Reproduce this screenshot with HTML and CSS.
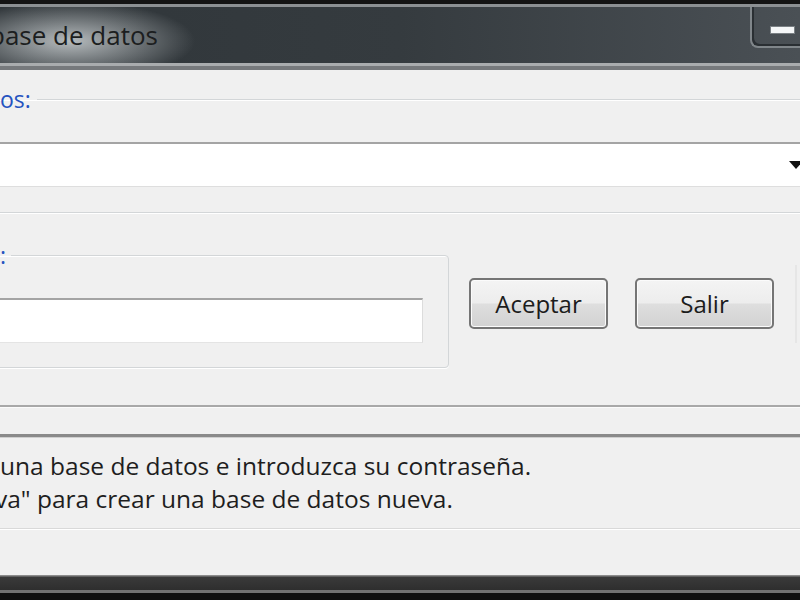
FILE: index.html
```html
<!DOCTYPE html>
<html lang="es">
<head>
    <meta charset="UTF-8">
    <meta name="viewport" content="width=device-width, initial-scale=1.0">
    <title>Abrir base de datos</title>
    <link rel="stylesheet" href="styles.css">
</head>
<body>
    <div class="frame-top"></div>
    <div class="titlebar">
        <span class="title">base de datos</span>
        <div class="caption-btn"><span class="min-glyph"></span></div>
    </div>
    <div class="title-edge"></div>

    <div class="dialog">
        <fieldset class="group group-db">
            <legend>os:</legend>
            <div class="combo">
                <svg class="combo-arrow" width="14" height="8" viewBox="0 0 14 8"><path d="M0 0h14L7 8z" fill="#111"/></svg>
            </div>
        </fieldset>

        <div class="login-row">
            <fieldset class="group group-pass">
                <legend>:</legend>
                <div class="textbox"></div>
            </fieldset>
            <button class="btn btn-ok">Aceptar</button>
            <button class="btn btn-exit">Salir</button>
            <div class="edge"></div>
        </div>

        <div class="separator"></div>

        <div class="status">
            <p>una base de datos e introduzca su contraseña.</p>
            <p class="cut">va" para crear una base de datos nueva.</p>
        </div>
    </div>

    <div class="frame-bottom"></div>
</body>
</html>
```

FILE: styles.css
```css
html, body {
    margin: 0;
    padding: 0;
    width: 800px;
    height: 600px;
    overflow: hidden;
}
body {
    font-family: "Open Sans", "Noto Sans", sans-serif;
    background-color: #f0f0f0;
    color: #1e1e1e;
    display: flex;
    flex-direction: column;
}

/* window frame */
.frame-top {
    height: 4px;
    background: #141414;
    border-bottom: 3px solid #8c9093;
}
.titlebar {
    height: 56px;
    display: flex;
    justify-content: space-between;
    align-items: flex-start;
    background:
        radial-gradient(ellipse 125px 40px at 70px 34px, rgba(205, 210, 212, 0.85), rgba(205, 210, 212, 0) 100%),
        linear-gradient(90deg, #30363a 0%, #353b3f 50%, #4a5055 100%);
}
.title {
    font-size: 26px;
    line-height: 56px;
    color: #1c1e20;
    margin-left: -11px;
}
.caption-btn {
    width: 50px;
    height: 41px;
    box-sizing: border-box;
    border-left: 2px solid #80868a;
    border-bottom: 2px solid #80868a;
    border-bottom-left-radius: 8px;
    box-shadow: inset 2px -2px 0 #2a2f33;
    padding: 20px 0 0 19px;
}
.min-glyph {
    display: block;
    width: 23px;
    height: 6px;
    background: #f4f6f7;
    box-shadow: 0 0 0 1px #7a8084;
}
.title-edge {
    height: 3px;
    background: #a9acae;
    border-bottom: 4px solid #76797c;
}

/* dialog body */
.dialog {
    flex: 1;
    display: flex;
    flex-direction: column;
}
.group {
    margin: 0 0 0 -20px;
    padding: 0;
    border: 1px solid #d3d6d8;
    border-radius: 4px;
    box-shadow: inset 1px 1px 0 #fff, 0 1px 0 #fff;
}
.group legend {
    color: #2553c0;
    font-size: 23px;
    line-height: 20px;
    padding: 0 6px 0 0;
    margin-left: 19px;
}
.group-db {
    margin-top: 19px;
    width: 840px;
    padding: 33px 0 25px 0;
    box-sizing: border-box;
}
.combo {
    height: 45px;
    box-sizing: border-box;
    background: #fff;
    border-top: 2px solid #a4a4a4;
    border-bottom: 1px solid #dedede;
    display: flex;
    align-items: center;
    justify-content: flex-end;
    padding-right: 16px;
}
.login-row {
    display: flex;
    align-items: flex-start;
    margin-top: 32px;
}
.group-pass {
    width: 469px;
    box-sizing: border-box;
    padding: 33px 25px 24px 0;
}
.group-pass legend {
    margin-left: 19px;
    padding-right: 5px;
}
.textbox {
    height: 45px;
    box-sizing: border-box;
    background: #fff;
    border-top: 2px solid #a4a4a4;
    border-right: 1px solid #dcdcdc;
    border-bottom: 1px solid #e4e4e4;
}
.btn {
    margin-top: 33px;
    width: 139px;
    height: 51px;
    font-family: inherit;
    font-size: 24px;
    color: #1c1c1c;
    border: 2px solid #757575;
    border-radius: 5px;
    background: linear-gradient(#f4f4f4 0%, #ededed 48%, #dedede 52%, #d2d2d2 100%);
    box-shadow: inset 0 0 0 1px #fbfbfb;
    padding: 0;
}
.btn-ok {
    margin-left: 20px;
}
.btn-exit {
    margin-left: 27px;
}
.edge {
    margin: 20px 0 0 21px;
    width: 2px;
    height: 78px;
    background: #e6e6e6;
}
.separator {
    margin-top: 37px;
    height: 2px;
    background: #a8a8a8;
    border-bottom: 1px solid #fbfbfb;
}
.status {
    margin-top: 26px;
    border-top: 3px solid #8a8a8a;
    border-bottom: 1px solid #d9d9d9;
    box-shadow: inset 0 1px 0 #cfcfcf, 0 1px 0 #fff;
    padding: 12px 0 13px 0;
}
.status p {
    margin: 0;
    font-size: 24.5px;
    line-height: 33px;
}
.status .cut {
    margin-left: -5px;
}

.frame-bottom {
    height: 25px;
    background: linear-gradient(#8c8c8c 0, #8c8c8c 1px, #3a3a3a 2px, #2e2e2e 15px, #727272 15px, #727272 18px, #101010 18px);
}
```
